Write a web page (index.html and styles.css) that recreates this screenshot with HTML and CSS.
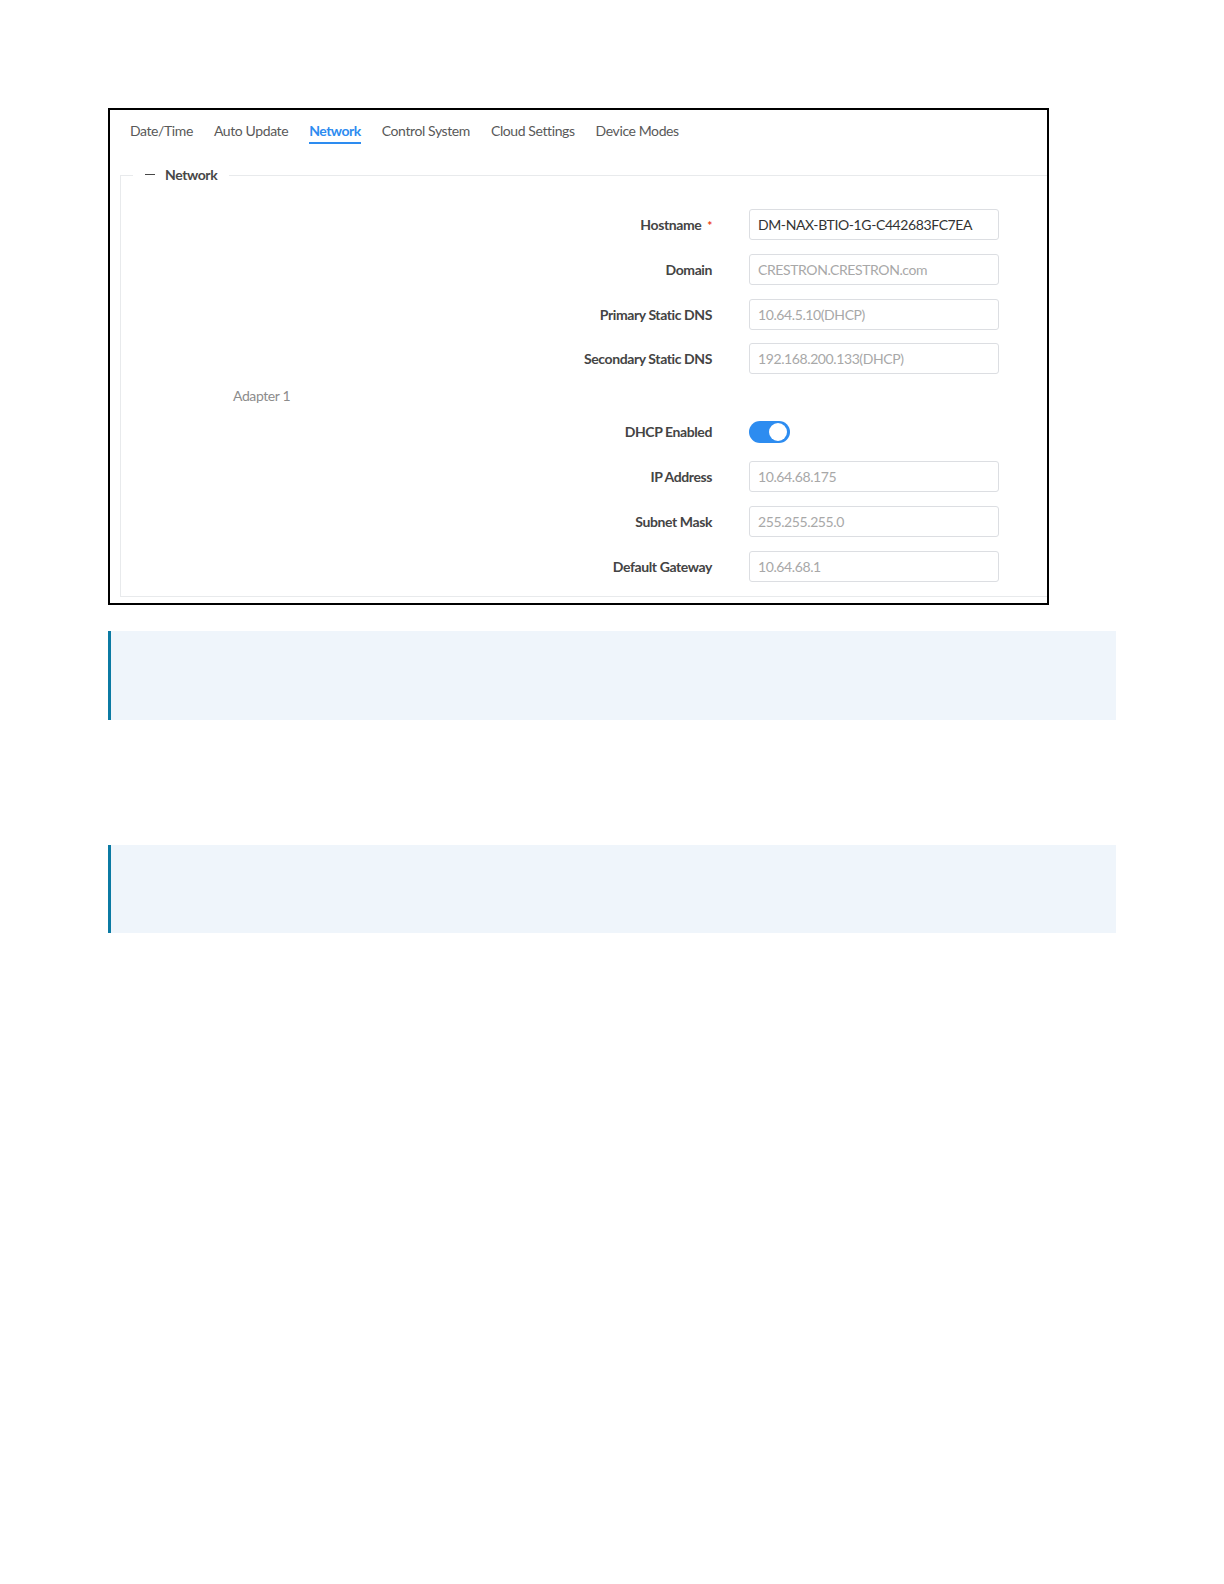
FILE: index.html
```html
<!DOCTYPE html>
<html lang="en">
<head>
    <meta charset="UTF-8">
    <title>Network Settings</title>
    <link rel="stylesheet" href="styles.css">
</head>
<body>

<div class="page">
    <div class="shot">
        <div class="tabs">
            <span class="tab">Date/Time</span>
            <span class="tab">Auto Update</span>
            <span class="tab active">Network</span>
            <span class="tab">Control System</span>
            <span class="tab">Cloud Settings</span>
            <span class="tab">Device Modes</span>
        </div>

        <fieldset class="group">
            <legend><span class="collapse"></span>Network</legend>

            <div class="row">
                <label class="label">Hostname<span class="req">*</span></label>
                <input class="field strong" type="text" value="DM-NAX-BTIO-1G-C442683FC7EA">
            </div>
            <div class="row">
                <label class="label">Domain</label>
                <input class="field" type="text" value="CRESTRON.CRESTRON.com" disabled>
            </div>
            <div class="row">
                <label class="label">Primary Static DNS</label>
                <input class="field" type="text" value="10.64.5.10(DHCP)" disabled>
            </div>
            <div class="row">
                <label class="label">Secondary Static DNS</label>
                <input class="field" type="text" value="192.168.200.133(DHCP)" disabled>
            </div>

            <div class="adapter">Adapter 1</div>

            <div class="row">
                <label class="label">DHCP Enabled</label>
                <span class="switch on"><span class="knob"></span></span>
            </div>
            <div class="row">
                <label class="label">IP Address</label>
                <input class="field" type="text" value="10.64.68.175" disabled>
            </div>
            <div class="row">
                <label class="label">Subnet Mask</label>
                <input class="field" type="text" value="255.255.255.0" disabled>
            </div>
            <div class="row">
                <label class="label">Default Gateway</label>
                <input class="field" type="text" value="10.64.68.1" disabled>
            </div>
        </fieldset>
    </div>

    <div class="note"></div>
    <div class="note second"></div>
</div>

</body>
</html>
```

FILE: styles.css
```css
body {
    margin: 0;
    background: #fff;
    font-family: Lato, "Open Sans", Arial, sans-serif;
    letter-spacing: -0.4px;
}
.page {
    padding: 108px 0 0 108px;
}
.shot {
    width: 941px;
    height: 497px;
    border: 2px solid #000;
    box-sizing: border-box;
    overflow: hidden;
    background: #fff;
}

/* tabs */
.tabs {
    display: flex;
    gap: 21px;
    padding: 11px 19px 0 20px;
}
.tab {
    font-size: 14px;
    line-height: 20px;
    color: #595959;
    padding-bottom: 1px;
    border-bottom: 2px solid transparent;
}
.tab.active {
    color: #2d8cf0;
    font-weight: 700;
    letter-spacing: -0.5px;
    border-bottom-color: #2d8cf0;
}

/* group */
.group {
    width: 1000px;
    margin: 21px 0 0 10px;
    padding: 24px 0 14px;
    border: 1px solid #e8eaec;
    box-sizing: border-box;
}
.group legend {
    margin-left: 12px;
    padding: 0 12px;
    font-size: 14px;
    line-height: 20px;
    font-weight: 700;
    color: #474747;
}
.collapse {
    display: inline-block;
    width: 10px;
    height: 1.5px;
    background: #474747;
    vertical-align: middle;
    margin: 0 10px 4px 0;
}

.row {
    display: flex;
    align-items: center;
    height: 31px;
    margin-bottom: 13.8px;
}
.row:last-child {
    margin-bottom: 0;
}
.label {
    width: 591px;
    margin-right: 37px;
    text-align: right;
    font-size: 14px;
    font-weight: 700;
    color: #444;
}
.req {
    color: #ed4014;
    font-size: 12px;
    margin-left: 6px;
}
.field {
    width: 250px;
    height: 31px;
    box-sizing: border-box;
    padding: 0 8px;
    border: 1px solid #dcdee2;
    border-radius: 3px;
    background: #fff;
    font-family: Lato, "Open Sans", Arial, sans-serif;
    font-size: 14px;
    letter-spacing: -0.4px;
    color: #a8a8a8;
}
.field.strong {
    color: #333;
}

.adapter {
    height: 16px;
    padding-top: 1px;
    box-sizing: border-box;
    line-height: 14px;
    padding-left: 112px;
    margin-bottom: 12px;
    font-size: 14px;
    color: #8c8c8c;
}

.switch {
    position: relative;
    display: inline-block;
    width: 41px;
    height: 22px;
    border-radius: 11px;
    background: #2d8cf0;
}
.knob {
    position: absolute;
    top: 2px;
    right: 3px;
    width: 18px;
    height: 18px;
    border-radius: 50%;
    background: #fff;
}

/* blank callouts under the screenshot */
.note {
    width: 1008px;
    height: 89px;
    margin-top: 26px;
    background: #eff5fb;
    border-left: 3px solid #0b7aa3;
    box-sizing: border-box;
}
.note.second {
    height: 88px;
    margin-top: 125px;
}
```
